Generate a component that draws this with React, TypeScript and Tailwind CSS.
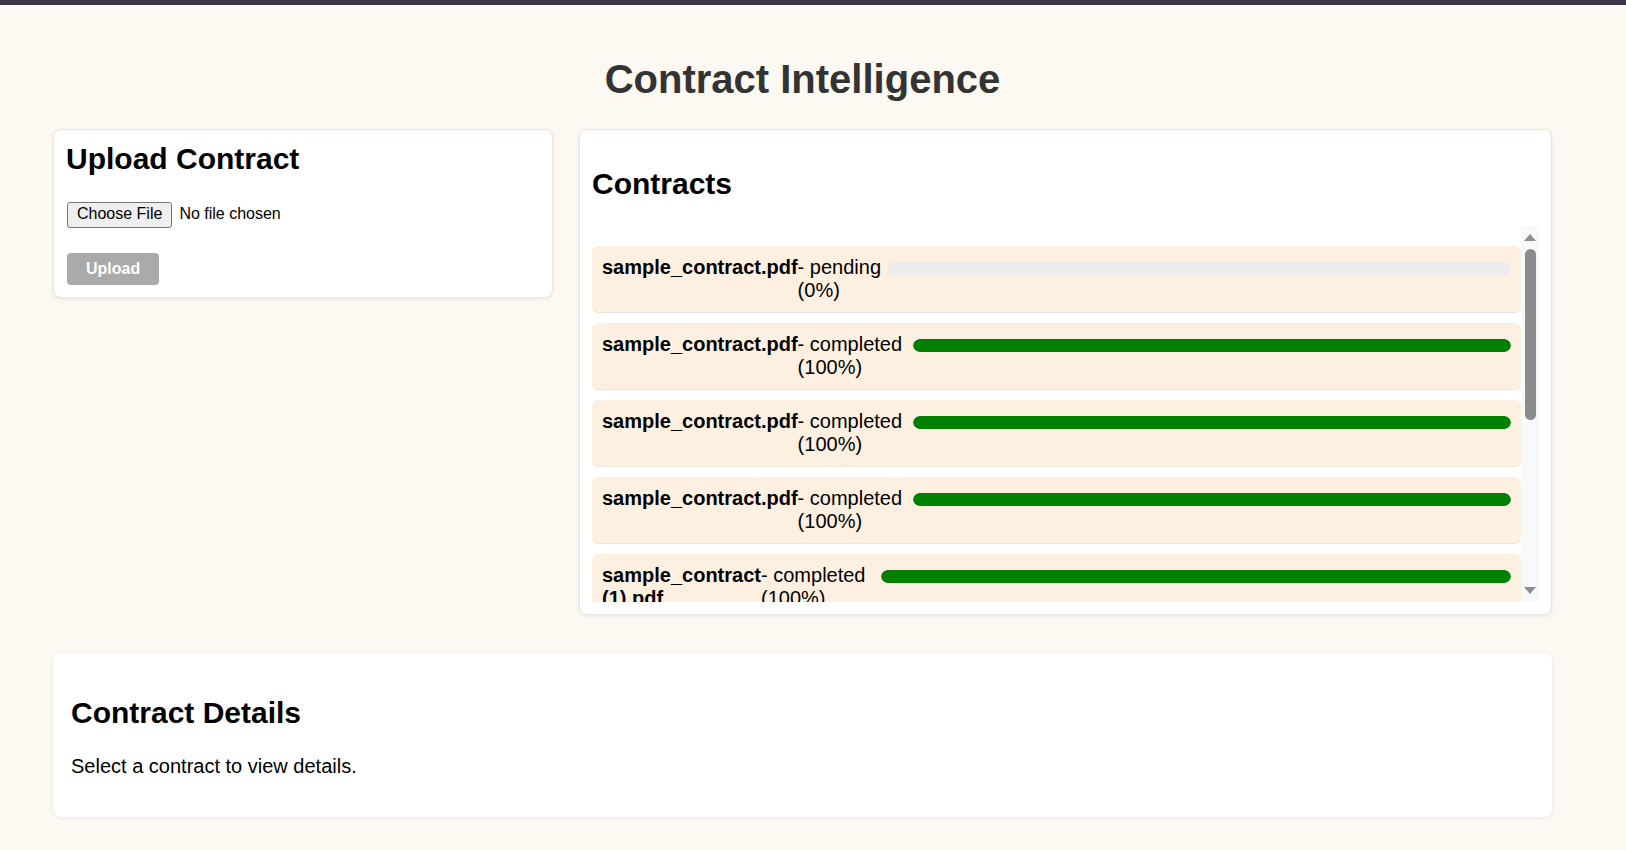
import React from "react";

type Item = {
  name: string;
  status: string;
  pct: number;
  nameCls: string;
  statusCls: string;
};

const items: Item[] = [
  { name: "sample_contract.pdf", status: "pending", pct: 0, nameCls: "shrink-0", statusCls: "w-[90px]" },
  { name: "sample_contract.pdf", status: "completed", pct: 100, nameCls: "shrink-0", statusCls: "w-[115px]" },
  { name: "sample_contract.pdf", status: "completed", pct: 100, nameCls: "shrink-0", statusCls: "w-[115px]" },
  { name: "sample_contract.pdf", status: "completed", pct: 100, nameCls: "shrink-0", statusCls: "w-[115px]" },
  { name: "sample_contract (1).pdf", status: "completed", pct: 100, nameCls: "w-[159px] shrink-0", statusCls: "w-[120px]" },
  { name: "sample_contract (1).pdf", status: "completed", pct: 100, nameCls: "w-[159px] shrink-0", statusCls: "w-[120px]" },
  { name: "sample_contract.pdf", status: "completed", pct: 100, nameCls: "shrink-0", statusCls: "w-[115px]" },
  { name: "sample_contract.pdf", status: "completed", pct: 100, nameCls: "shrink-0", statusCls: "w-[115px]" },
  { name: "sample_contract.pdf", status: "completed", pct: 100, nameCls: "shrink-0", statusCls: "w-[115px]" },
];

function ContractRow({ item }: { item: Item }) {
  return (
    <div className="mb-[10px] flex items-start rounded-[6px] border-b border-[#ebe6df] bg-[#fef0e0] p-[10px] text-[20px] leading-[23px] text-black">
      <strong className={`font-bold ${item.nameCls}`}>{item.name}</strong>
      <span className={`shrink-0 ${item.statusCls}`}>
        - {item.status} ({item.pct}%)
      </span>
      <div className="mt-[6px] h-[13px] flex-1 overflow-hidden rounded-full bg-[#ececec]">
        <div className="h-full rounded-full bg-[#008000]" style={{ width: `${item.pct}%` }} />
      </div>
    </div>
  );
}

function Scrollbar() {
  return (
    <div className="flex w-[18px] shrink-0 flex-col items-center bg-[#f9f9f9] pt-[8px] pb-[8px]">
      <svg width="12" height="7" viewBox="0 0 12 7">
        <polygon points="6,0 12,7 0,7" fill="#8d8d8d" />
      </svg>
      <div className="mt-[8px] h-[171px] w-[11px] rounded-full bg-[#8c8c8c]" />
      <div className="flex-1" />
      <svg width="12" height="7" viewBox="0 0 12 7">
        <polygon points="0,0 12,0 6,7" fill="#8d8d8d" />
      </svg>
    </div>
  );
}

export default function App() {
  return (
    <div
      className="min-h-[850px] bg-[#fdf8f2] text-black"
      style={{ fontFamily: '"Liberation Sans", Arial, sans-serif' }}
    >
      <div className="h-[5px] bg-[#3d3548]" />
      <div className="pl-[53px]">
        <div className="w-[1499px]">
          <h1 className="mt-[51px] mb-[27px] text-center text-[40px] font-bold leading-[46px] text-[#333333]">
            Contract Intelligence
          </h1>

          <div className="flex items-start gap-[26px]">
            <div className="w-[500px] shrink-0 rounded-[8px] border border-[#e6e6e6] bg-white p-[12px] shadow-[0_1px_4px_rgba(0,0,0,0.08)]">
              <h2 className="text-[30px] font-bold leading-[34.5px]">Upload Contract</h2>
              <div className="mt-[25px] ml-[1px] flex items-center text-[16px] leading-[18.4px]">
                <span className="flex h-[26px] items-center rounded-[3px] border border-[#767676] bg-[#efefef] px-[9px]">
                  Choose File
                </span>
                <span className="ml-[7px]">No file chosen</span>
              </div>
              <div className="mt-[25px] ml-[1px] inline-block rounded-[4px] bg-[#aaaaaa] px-[19px] py-[7px] text-[16px] font-bold leading-[18.4px] text-white">
                Upload
              </div>
            </div>

            <div className="flex-1 rounded-[8px] border border-[#e6e6e6] bg-white p-[12px] shadow-[0_1px_4px_rgba(0,0,0,0.08)]">
              <h2 className="mt-[25px] mb-[24px] text-[30px] font-bold leading-[34.5px]">Contracts</h2>
              <div className="flex h-[376px]">
                <div className="flex-1 overflow-hidden pt-[20px]">
                  {items.map((it, i) => (
                    <ContractRow key={i} item={it} />
                  ))}
                </div>
                <Scrollbar />
              </div>
            </div>
          </div>

          <div className="mt-[38px] rounded-[8px] bg-white p-[18px] shadow-[0_1px_4px_rgba(0,0,0,0.08)]">
            <h2 className="mt-[25px] mb-[25px] text-[30px] font-bold leading-[34.5px]">Contract Details</h2>
            <p className="mb-[21px] text-[20px] leading-[23px]">Select a contract to view details.</p>
          </div>
        </div>
      </div>
    </div>
  );
}
